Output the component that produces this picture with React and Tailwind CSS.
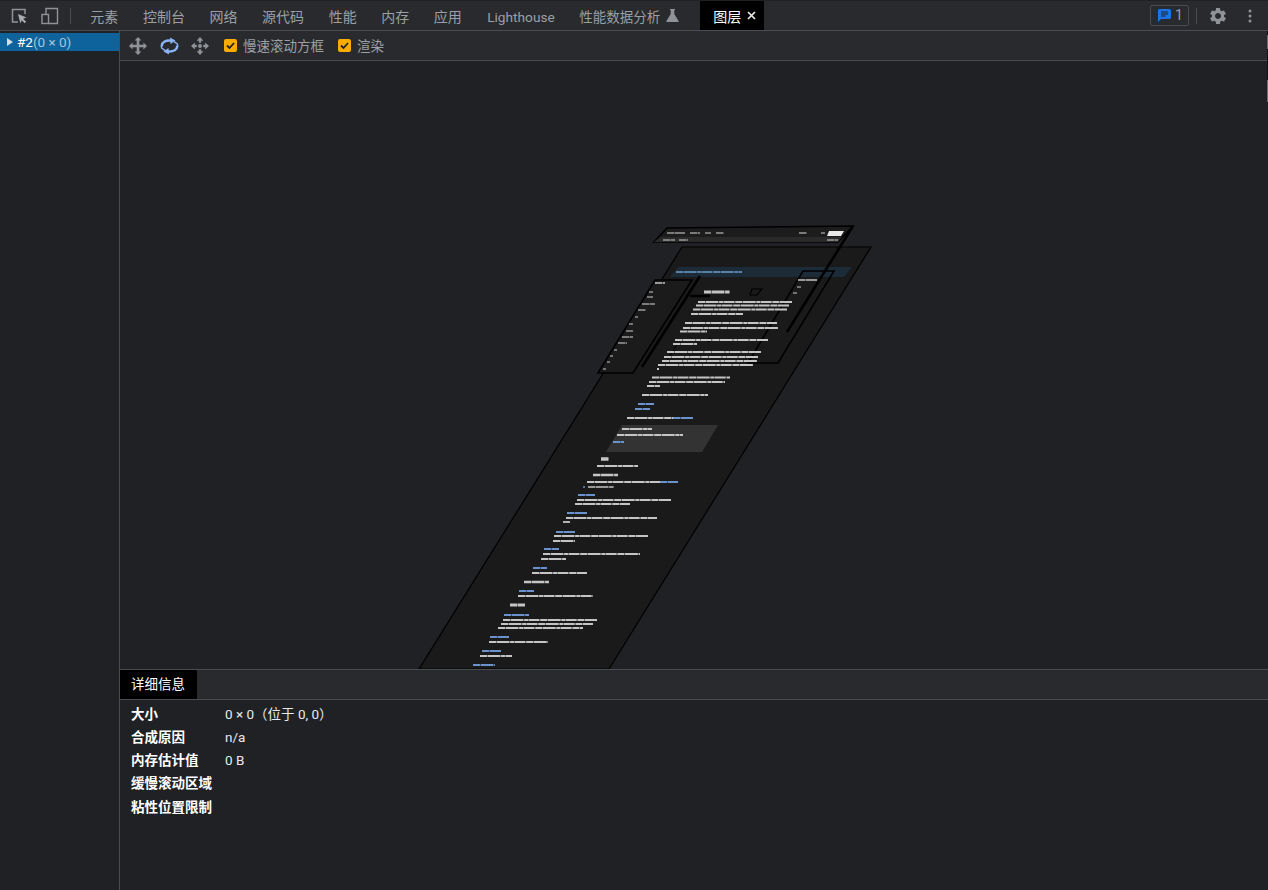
import React from "react";

const TABS = ["元素", "控制台", "网络", "源代码", "性能", "内存", "应用"];

const DETAILS = [
  ["大小", "0 × 0（位于 0, 0）"],
  ["合成原因", "n/a"],
  ["内存估计值", "0 B"],
  ["缓慢滚动区域", ""],
  ["粘性位置限制", ""],
];

const W = "#c4c4c4";
const G = "#9a9a9a";
const B = "#6a92cc";

// blurred page text inside the 3D layer view: x1, x2, y, colour, thickness
const LINES = [
  [667, 685, 233, G, 1.4], [690, 700, 233, G, 1.4], [705, 711, 233, G, 1.4], [716, 724, 233, G, 1.4],
  [799, 807, 233, G, 1.4], [821, 825, 233, G, 1.4], [663, 675, 240, G, 1.4], [679, 688, 240, G, 1.4], [827, 838, 240, G, 1.4],
  [676, 742, 272, "#6f9ac8", 1.6],
  [655, 665, 283, W, 1.6], [649, 653, 292, G, 1.4], [647, 653, 297, G, 1.4], [642, 655, 304, G, 1.4], [638, 646, 310, G, 1.4],
  [635, 638, 317, G, 1.4], [629, 633, 324, G, 1.4], [626, 633, 331, G, 1.4], [622, 633, 337, G, 1.4], [618, 627, 343, G, 1.4],
  [614, 617, 350, G, 1.4], [610, 613, 356, G, 1.4], [607, 610, 362, G, 1.4], [603, 606, 369, G, 1.4],
  [798, 817, 280, W, 1.6], [797, 801, 287, G, 1.4], [793, 797, 293, G, 1.4],
  [704, 730, 292, W, 3.2],
  [698, 792, 302, W, 1.8], [696, 789, 305.5, W, 1.8], [693, 787, 309.5, W, 1.8], [691, 743, 314, W, 1.8],
  [685, 777, 323, W, 1.8], [683, 778, 328, W, 1.8], [680, 707, 331.5, W, 1.8],
  [675, 768, 340, W, 1.8], [673, 697, 344, W, 1.8],
  [667, 761, 352, W, 1.8], [664, 758, 357, W, 1.8], [662, 757, 361, W, 1.8], [658, 753, 365, W, 1.8], [657, 659, 369, W, 1.8],
  [652, 730, 377.5, W, 1.8], [649, 725, 382, W, 1.8], [647, 660, 386, W, 1.8],
  [642, 708, 395, W, 1.8], [638, 654, 404, B, 1.9], [635, 650, 409, B, 1.9],
  [627, 673, 418, W, 1.8], [673, 693, 418, B, 1.8],
  [622, 652, 429, W, 1.9], [617, 683, 435, W, 1.8], [613, 624, 442, B, 1.9],
  [601, 609, 459, W, 3.4], [597, 638, 466, W, 1.8], [593, 618, 475, W, 2.6],
  [587, 660, 482, W, 1.8], [660, 678, 482, B, 1.8], [583, 585, 487, B, 1.6], [588, 614, 487, W, 1.7],
  [578, 595, 495, B, 1.9], [577, 671, 500, W, 1.8], [575, 630, 504, W, 1.8],
  [567, 587, 513, B, 1.9], [566, 657, 518, W, 1.8], [563, 570, 522, W, 1.8],
  [556, 575, 532, B, 1.9], [554, 648, 536, W, 1.8], [553, 575, 541, W, 1.8],
  [544, 559, 549, B, 1.9], [543, 640, 554, W, 1.8], [541, 566, 559, W, 1.8],
  [533, 547, 568, B, 1.9], [532, 587, 573, W, 1.8], [524, 549, 582, W, 2.6],
  [519, 534, 591, B, 1.9], [518, 593, 596, W, 1.8], [510, 525, 605, W, 2.8],
  [504, 529, 615, B, 1.9], [503, 597, 620, W, 1.8], [501, 593, 624, W, 1.8], [498, 583, 628, W, 1.8],
  [490, 509, 637, B, 1.9], [489, 548, 642, W, 1.8], [482, 501, 651, B, 1.9], [480, 512, 656, W, 1.8], [473, 495, 665, B, 1.9],
];

function LayerView() {
  return (
    <svg viewBox="120 61 1148 608" className="w-full h-[608px] block">
      <defs>
        <filter id="soft" x="-5%" y="-5%" width="110%" height="110%">
          <feGaussianBlur stdDeviation="0.55" />
        </filter>
      </defs>
      <polygon points="682,247 871,247 609,669 419,669" fill="#1a1a1a" stroke="#000000" strokeWidth="1.2" />
      <polygon points="678,267 852,267 844,277 670,277" fill="#1c2b38" />
      <polygon points="622,425 718,425 702,452 606,452" fill="#333333" />
      <polygon points="667,228 853,226 838,242 654,242" fill="#1c1c1c" stroke="#000000" strokeWidth="1.6" />
      <polygon points="660,237 842,237 838,242 654,242" fill="#2a2a2a" />
      <polygon points="829,231 844,231 841,236 827,236" fill="#e8e8e8" filter="url(#soft)" />
      <polygon points="655,280 692,280 633,373 598,373" fill="#1b1b1b" stroke="#000000" strokeWidth="1.6" />
      <polygon points="803,271 834,271 778,363 748,363" fill="none" stroke="#000000" strokeWidth="1.6" />
      <polygon points="752,289 762,289 757,295 750,295" fill="none" stroke="#000000" strokeWidth="1.2" />
      <line x1="853" y1="226" x2="787" y2="332" stroke="#000000" strokeWidth="2.6" />
      <line x1="700" y1="276" x2="642" y2="367" stroke="#000000" strokeWidth="2.6" />
      <line x1="678" y1="343" x2="666" y2="362" stroke="#000000" strokeWidth="1" />
      <line x1="690" y1="296" x2="710" y2="296" stroke="#000000" strokeWidth="2.4" />
      <line x1="710" y1="338" x2="708" y2="342" stroke="#000000" strokeWidth="2.6" />
      <g filter="url(#soft)">
        {LINES.map(([x1, x2, y, color, size], i) => (
          <line
            key={i}
            x1={x1}
            x2={x2}
            y1={y}
            y2={y}
            stroke={color}
            strokeWidth={size}
            strokeDasharray="7 0.5 13 0.6 4 0.4 11 0.7"
          />
        ))}
      </g>
    </svg>
  );
}

function InspectIcon() {
  return (
    <svg width="18" height="18" viewBox="0 0 18 18" fill="none" className="block">
      <path d="M8 15H2.5V2.5H15V7" stroke="#8f9398" strokeWidth="1.5" />
      <path d="M8 7l8.5 3.5-3.4 1.3 3 3-1.4 1.4-3-3-1.3 3.4z" fill="#a9adb2" />
    </svg>
  );
}

function DeviceIcon() {
  return (
    <svg width="18" height="18" viewBox="0 0 18 18" fill="none" className="block">
      <path d="M5 7V1.5h11.5v15H8" stroke="#8f9398" strokeWidth="1.4" />
      <rect x="1" y="7.5" width="6.5" height="9" stroke="#8f9398" strokeWidth="1.4" />
    </svg>
  );
}

function PanIcon() {
  return (
    <svg width="18" height="18" viewBox="0 0 18 18" className="block" fill="#8f9398">
      <path d="M9 0l3.4 3.6H10.300v4.100h4.100V5.600L18 9l-3.600 3.400v-2.100h-4.100v4.100h2.100L9 18l-3.400-3.600h2.100v-4.100H3.600v2.100L0 9l3.600-3.400v2.100h4.100V3.600H5.600z" />
    </svg>
  );
}

function RotateIcon() {
  return (
    <svg width="19" height="18" viewBox="0 0 19 18" fill="none" className="block">
      <path d="M2 9.500C1 5.500 6 3 11 3.600" stroke="#8ab4f8" strokeWidth="2.400" />
      <path d="M10 .4l5.500 3-5 3.600z" fill="#8ab4f8" />
      <path d="M17 8.500c1 4-4 6.500-9 5.900" stroke="#8ab4f8" strokeWidth="2.400" />
      <path d="M9 17.600l-5.500-3 5-3.600z" fill="#8ab4f8" />
      <path d="M14 4.600l3.500 2.400v3" stroke="#8ab4f8" strokeWidth="1.400" />
      <path d="M5 13.400L1.500 11V8" stroke="#8ab4f8" strokeWidth="1.400" />
    </svg>
  );
}

function MoveIcon() {
  return (
    <svg width="18" height="18" viewBox="0 0 18 18" className="block" fill="#8f9398">
      <path d="M9 0l3.400 3.800h-2.200v2H7.800v-2H5.600zM9 18l-3.400-3.800h2.200v-2h2.400v2h2.200zM0 9l3.800-3.400v2.200h2v2.400h-2v2.200zM18 9l-3.800 3.400v-2.200h-2V7.800h2V5.600z" />
      <circle cx="9" cy="9" r="2" />
    </svg>
  );
}

function CheckOption({ label }) {
  return (
    <label className="flex items-center gap-[6px] text-[13.5px] text-[#9aa0a6]">
      <span className="w-[13px] h-[13px] rounded-[2px] bg-[#f9ab00] flex items-center justify-center">
        <svg width="11" height="11" viewBox="0 0 11 11" fill="none">
          <path d="M2 5.500l2.500 2.500L9 3" stroke="#202124" strokeWidth="1.800" />
        </svg>
      </span>
      <span className="pt-[1px]">{label}</span>
    </label>
  );
}

export default function App() {
  return (
    <div
      className="relative w-[1268px] h-[890px] overflow-hidden flex flex-col bg-[#202124] text-[#9aa0a6]"
      style={{ fontFamily: 'Roboto, "Noto Sans CJK SC", sans-serif' }}
    >
      {/* main tab strip */}
      <div className="h-[31px] shrink-0 flex items-stretch bg-[#292a2d] border-b border-[#494c50] border-t border-t-[#202124]">
        <div className="w-[71px] flex items-center pl-[10px] gap-[13px] relative">
          <InspectIcon />
          <DeviceIcon />
          <span className="absolute right-0 top-[7px] h-[16px] w-px bg-[#494c50]" />
        </div>
        <div className="flex items-stretch pl-[7px] text-[14px] whitespace-nowrap">
          {TABS.map((tab) => (
            <div key={tab} className="px-[12.3px] flex items-center pt-[3px]">{tab}</div>
          ))}
          <div className="pl-[13px] pr-[12.5px] flex items-center pt-[3px] text-[13.7px]">Lighthouse</div>
          <div className="pl-[12px] pr-[21px] flex items-center gap-[6px] text-[13.5px]">
            <span className="pt-[3px]">性能数据分析</span>
            <svg width="13" height="13" viewBox="0 0 13 13" fill="#8f9398">
              <path d="M4 0h5v1H8.300v4l4.300 7a.7.7 0 0 1-.6 1H1a.7.7 0 0 1-.6-1l4.300-7V1H4z" />
            </svg>
          </div>
          <div className="w-[64px] bg-black text-white flex items-center pl-[13px] gap-[6px]">
            <span className="pt-[3px]">图层</span>
            <svg width="9" height="9" viewBox="0 0 9 9" stroke="#e8eaed" strokeWidth="1.700">
              <path d="M1 1l7 7M8 1L1 8" />
            </svg>
          </div>
        </div>
        <div className="ml-auto flex items-center pr-[16px]">
          <div className="w-[39px] h-[21px] border border-[#494c50] rounded-[2px] flex items-center pl-[7px] gap-[4px] text-[14px]">
            <svg width="13" height="13" viewBox="0 0 13 13">
              <path d="M1.500 0h10A1.500 1.500 0 0 1 13 1.500v7A1.500 1.500 0 0 1 11.500 10H3l-3 3V1.500A1.500 1.500 0 0 1 1.500 0z" fill="#1a73e8" />
              <path d="M3 3h7M3 5h7M3 7h4.500" stroke="#202124" strokeWidth="1" />
            </svg>
            1
          </div>
          <span className="w-px h-[16px] bg-[#494c50] ml-[7px]" />
          <svg width="20" height="20" viewBox="0 0 24 24" fill="#8f9398" className="ml-[11px]">
            <path d="M19.14 12.94c.04-.3.06-.61.06-.94 0-.32-.02-.64-.07-.94l2.03-1.58c.18-.14.23-.41.12-.61l-1.92-3.32c-.12-.22-.37-.29-.59-.22l-2.39.96c-.5-.38-1.03-.7-1.62-.94l-.36-2.54c-.04-.24-.24-.41-.48-.41h-3.84c-.24 0-.43.17-.47.41l-.36 2.54c-.59.24-1.13.57-1.62.94l-2.39-.96c-.22-.08-.47 0-.59.22L2.740 8.870c-.12.21-.08.47.12.61l2.030 1.580c-.05.3-.09.63-.09.94s.02.64.07.94l-2.030 1.580c-.18.14-.23.41-.12.61l1.920 3.320c.12.22.37.29.59.22l2.390-.96c.5.38 1.030.7 1.620.94l.36 2.540c.05.24.24.41.48.41h3.840c.24 0 .44-.17.47-.41l.36-2.540c.59-.24 1.130-.56 1.620-.94l2.390.96c.22.08.47 0 .59-.22l1.920-3.320c.12-.22.07-.47-.12-.61l-2.010-1.580zM12 15.600c-1.980 0-3.600-1.620-3.600-3.600s1.620-3.600 3.600-3.600 3.600 1.620 3.600 3.600-1.620 3.600-3.600 3.600z" />
          </svg>
          <svg width="4" height="14" viewBox="0 0 4 14" fill="#8f9398" className="ml-[20px]">
            <circle cx="2" cy="2" r="1.500" />
            <circle cx="2" cy="7" r="1.500" />
            <circle cx="2" cy="12" r="1.500" />
          </svg>
        </div>
      </div>

      <div className="flex-1 flex min-h-0">
        {/* layer tree */}
        <div className="w-[120px] shrink-0 border-r border-[#494c50] pt-[2px]">
          <div className="h-[18px] bg-[#0e639c] flex items-center pl-[7px] text-[13.5px] whitespace-nowrap">
            <span className="w-0 h-0 border-y-[4.5px] border-y-transparent border-l-[6px] border-l-[#d5dde5] mr-[4px]" />
            <span className="text-white">#2</span>
            <span className="text-[#a8c4d8]">(0 × 0)</span>
          </div>
        </div>

        <div className="flex-1 flex flex-col min-w-0">
          {/* toolbar */}
          <div className="h-[30px] shrink-0 flex items-center pl-[9px] bg-[#292a2d] border-b border-[#494c50]">
            <PanIcon />
            <span className="ml-[13px]"><RotateIcon /></span>
            <span className="ml-[12px]"><MoveIcon /></span>
            <span className="ml-[15px]"><CheckOption label="慢速滚动方框" /></span>
            <span className="ml-[14px]"><CheckOption label="渲染" /></span>
          </div>

          <div className="h-[608px] shrink-0 border-b border-[#494c50] box-content">
            <LayerView />
          </div>

          {/* details pane */}
          <div className="h-[30px] shrink-0 flex bg-[#292a2d] border-b border-[#494c50]">
            <div className="w-[77px] bg-black text-white text-[13.5px] flex items-center pl-[11px]">详细信息</div>
          </div>
          <div className="pt-[2px] pl-[11px] text-[13.5px] text-[#e8eaed]">
            {DETAILS.map(([key, value]) => (
              <div key={key} className="h-[23.25px] flex items-center">
                <span className="w-[94px] font-bold shrink-0 text-white">{key}</span>
                <span>{value}</span>
              </div>
            ))}
          </div>
        </div>
      </div>

      {/* sliver of the next window along the right edge */}
      <div className="absolute right-0 top-[31px] w-px h-[72px] bg-[#111111]">
        <div className="h-[14px] mt-[4px] bg-[#6a6c70]" />
        <div className="h-[22px] mt-[31px] bg-[#6a6c70]" />
      </div>
    </div>
  );
}
